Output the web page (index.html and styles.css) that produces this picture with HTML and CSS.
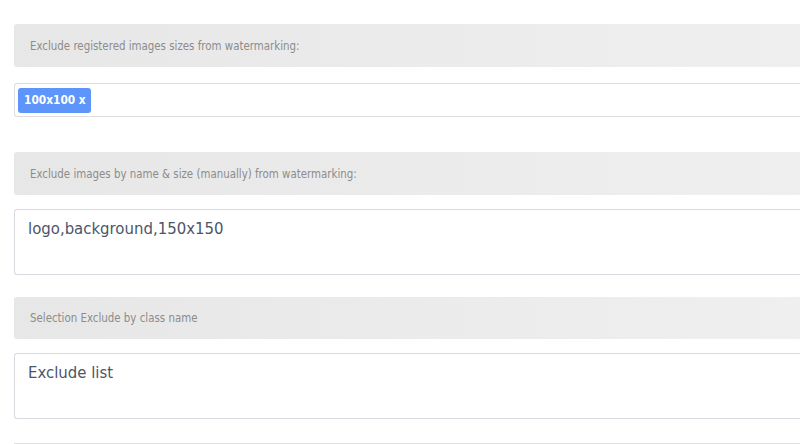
FILE: index.html
```html
<!DOCTYPE html>
<html>
<head>
<meta charset="utf-8">
<link rel="stylesheet" href="styles.css">
</head>
<body>
<div class="page">
  <div class="section">
    <div class="label">Exclude registered images sizes from watermarking:</div>
    <div class="tag-input"><span class="tag">100x100 x</span></div>
  </div>
  <div class="section s2">
    <div class="label">Exclude images by name &amp; size (manually) from watermarking:</div>
    <div class="textarea">logo,background,150x150</div>
  </div>
  <div class="section s3">
    <div class="label">Selection Exclude by class name</div>
    <div class="textarea">Exclude list</div>
  </div>
  <div class="section s4">
    <div class="next"></div>
  </div>
</div>
</body>
</html>
```
FILE: styles.css
```css
html, body {
  margin: 0;
  padding: 0;
  background: #ffffff;
  overflow: hidden;
}
.page {
  padding: 24px 0 0 14px;
  font-family: "DejaVu Sans Condensed", "DejaVu Sans", sans-serif;
  font-stretch: condensed;
}
.section {
  display: flex;
  flex-direction: column;
}
.label {
  height: 43px;
  display: flex;
  align-items: center;
  padding-left: 16px;
  background: linear-gradient(to right, #e7e7e7, #efefef);
  border-radius: 3px 0 0 3px;
  font-size: 11.4px;
  color: #8c8c8c;
}
.tag-input {
  margin-top: 16px;
  border: 1px solid #dedede;
  border-right: none;
  border-radius: 3px 0 0 3px;
  padding: 4px 3px;
  box-sizing: border-box;
  height: 34px;
  display: flex;
  align-items: flex-start;
}
.tag {
  background: #5d95fa;
  color: #ffffff;
  font-size: 11.8px;
  font-weight: bold;
  height: 25px;
  line-height: 25px;
  padding: 0 5px 0 6px;
  border-radius: 3px;
}
.s2 { margin-top: 35px; }
.s3 { margin-top: 22px; }
.s3 .label { height: 42px; }
.textarea {
  margin-top: 14px;
  height: 66px;
  box-sizing: border-box;
  border: 1px solid #d9dae0;
  border-right: none;
  border-radius: 3px 0 0 3px;
  padding: 9px 13px;
  font-size: 16.6px;
  color: #4d5568;
}
.s4 { margin-top: 24px; }
.next {
  height: 20px;
  border-top: 1px solid #e0e0e0;
}
```
